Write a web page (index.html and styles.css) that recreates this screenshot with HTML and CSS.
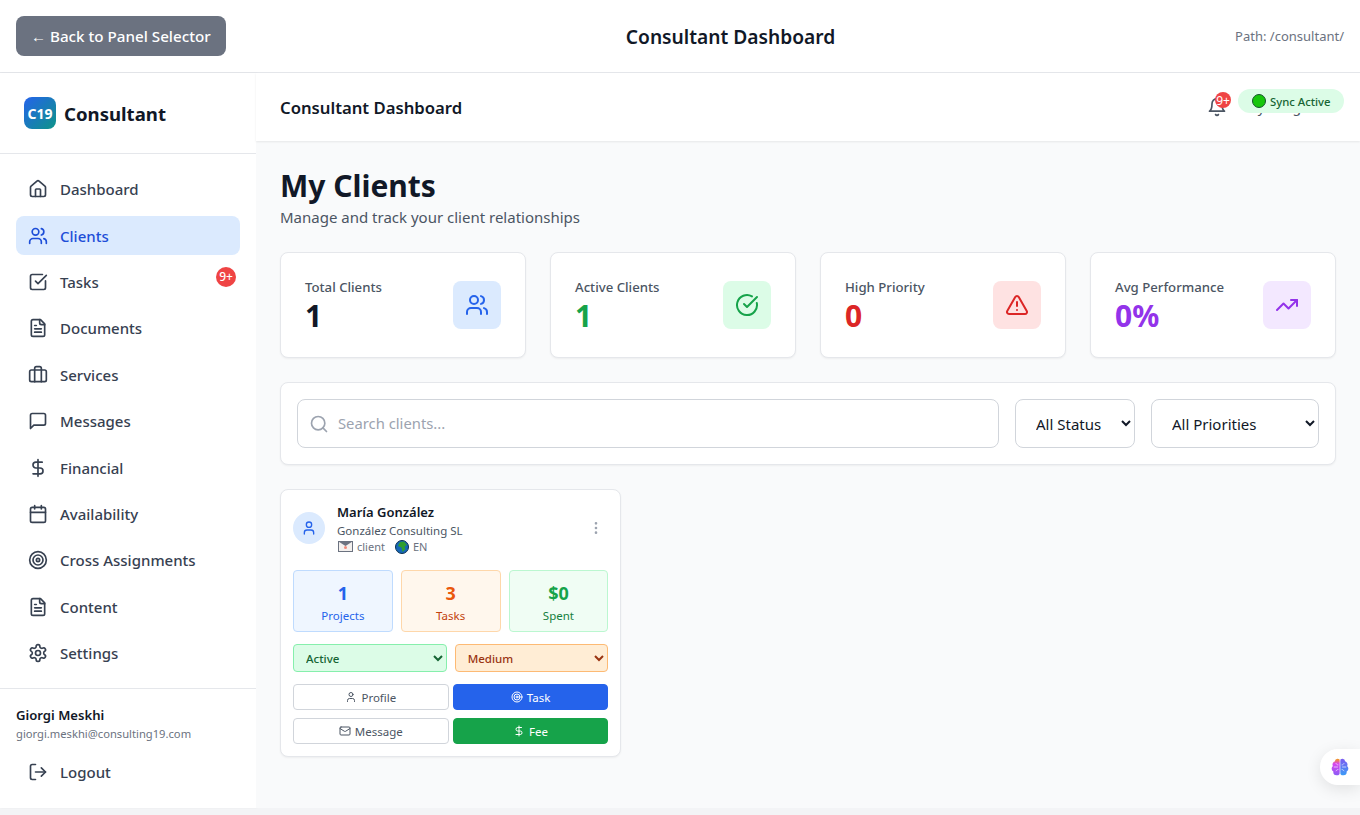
FILE: index.html
```html
<!DOCTYPE html>
<html lang="en">
<head>
    <meta charset="UTF-8">
    <meta name="viewport" content="width=device-width, initial-scale=1.0">
    <title>Consultant Dashboard</title>
    <link rel="stylesheet" href="styles.css">
</head>
<body>
    <svg class="icon-defs" width="0" height="0" aria-hidden="true">
        <defs>
            <symbol id="i-home" viewBox="0 0 24 24"><path d="M15 21v-8a1 1 0 0 0-1-1h-4a1 1 0 0 0-1 1v8"/><path d="M3 10a2 2 0 0 1 .709-1.528l7-5.999a2 2 0 0 1 2.582 0l7 5.999A2 2 0 0 1 21 10v9a2 2 0 0 1-2 2H5a2 2 0 0 1-2-2z"/></symbol>
            <symbol id="i-users" viewBox="0 0 24 24"><path d="M16 21v-2a4 4 0 0 0-4-4H6a4 4 0 0 0-4 4v2"/><circle cx="9" cy="7" r="4"/><path d="M22 21v-2a4 4 0 0 0-3-3.87"/><path d="M16 3.13a4 4 0 0 1 0 7.75"/></symbol>
            <symbol id="i-check-square" viewBox="0 0 24 24"><path d="M21 10.656V19a2 2 0 0 1-2 2H5a2 2 0 0 1-2-2V5a2 2 0 0 1 2-2h12.344"/><path d="m9 11 3 3L22 4"/></symbol>
            <symbol id="i-file" viewBox="0 0 24 24"><path d="M15 2H6a2 2 0 0 0-2 2v16a2 2 0 0 0 2 2h12a2 2 0 0 0 2-2V7Z"/><path d="M14 2v4a2 2 0 0 0 2 2h4"/><path d="M10 9H8"/><path d="M16 13H8"/><path d="M16 17H8"/></symbol>
            <symbol id="i-briefcase" viewBox="0 0 24 24"><path d="M16 20V4a2 2 0 0 0-2-2h-4a2 2 0 0 0-2 2v16"/><rect width="20" height="14" x="2" y="6" rx="2"/></symbol>
            <symbol id="i-message" viewBox="0 0 24 24"><path d="M21 15a2 2 0 0 1-2 2H7l-4 4V5a2 2 0 0 1 2-2h14a2 2 0 0 1 2 2z"/></symbol>
            <symbol id="i-dollar" viewBox="0 0 24 24"><path d="M12 2v20"/><path d="M17 5H9.5a3.5 3.5 0 0 0 0 7h5a3.5 3.5 0 0 1 0 7H6"/></symbol>
            <symbol id="i-calendar" viewBox="0 0 24 24"><path d="M8 2v4"/><path d="M16 2v4"/><rect width="18" height="18" x="3" y="4" rx="2"/><path d="M3 10h18"/></symbol>
            <symbol id="i-target" viewBox="0 0 24 24"><circle cx="12" cy="12" r="10"/><circle cx="12" cy="12" r="6"/><circle cx="12" cy="12" r="2"/></symbol>
            <symbol id="i-settings" viewBox="0 0 24 24"><path d="M12.22 2h-.44a2 2 0 0 0-2 2v.18a2 2 0 0 1-1 1.73l-.43.25a2 2 0 0 1-2 0l-.15-.08a2 2 0 0 0-2.73.73l-.22.38a2 2 0 0 0 .73 2.73l.15.1a2 2 0 0 1 1 1.72v.51a2 2 0 0 1-1 1.74l-.15.09a2 2 0 0 0-.73 2.73l.22.38a2 2 0 0 0 2.73.73l.15-.08a2 2 0 0 1 2 0l.43.25a2 2 0 0 1 1 1.73V20a2 2 0 0 0 2 2h.44a2 2 0 0 0 2-2v-.18a2 2 0 0 1 1-1.73l.43-.25a2 2 0 0 1 2 0l.15.08a2 2 0 0 0 2.73-.73l.22-.39a2 2 0 0 0-.73-2.73l-.15-.08a2 2 0 0 1-1-1.74v-.5a2 2 0 0 1 1-1.74l.15-.09a2 2 0 0 0 .73-2.73l-.22-.38a2 2 0 0 0-2.73-.73l-.15.08a2 2 0 0 1-2 0l-.43-.25a2 2 0 0 1-1-1.73V4a2 2 0 0 0-2-2z"/><circle cx="12" cy="12" r="3"/></symbol>
            <symbol id="i-logout" viewBox="0 0 24 24"><path d="M9 21H5a2 2 0 0 1-2-2V5a2 2 0 0 1 2-2h4"/><path d="m16 17 5-5-5-5"/><path d="M21 12H9"/></symbol>
            <symbol id="i-bell" viewBox="0 0 24 24"><path d="M6 8a6 6 0 0 1 12 0c0 7 3 9 3 9H3s3-2 3-9"/><path d="M10.3 21a1.94 1.94 0 0 0 3.4 0"/></symbol>
            <symbol id="i-circle-check" viewBox="0 0 24 24"><path d="M21.801 10A10 10 0 1 1 17 3.335"/><path d="m9 11 3 3L22 4"/></symbol>
            <symbol id="i-alert" viewBox="0 0 24 24"><path d="m21.73 18-8-14a2 2 0 0 0-3.48 0l-8 14A2 2 0 0 0 4 21h16a2 2 0 0 0 1.73-3"/><path d="M12 9v4"/><path d="M12 17h.01"/></symbol>
            <symbol id="i-trending" viewBox="0 0 24 24"><path d="m22 7-8.5 8.5-5-5L2 17"/><path d="M16 7h6v6"/></symbol>
            <symbol id="i-search" viewBox="0 0 24 24"><circle cx="11" cy="11" r="8"/><path d="m21 21-4.3-4.3"/></symbol>
            <symbol id="i-user" viewBox="0 0 24 24"><path d="M19 21v-2a4 4 0 0 0-4-4H9a4 4 0 0 0-4 4v2"/><circle cx="12" cy="7" r="4"/></symbol>
            <symbol id="i-mail" viewBox="0 0 24 24"><rect width="20" height="16" x="2" y="4" rx="2"/><path d="m22 7-8.97 5.7a1.94 1.94 0 0 1-2.06 0L2 7"/></symbol>
            <symbol id="i-more" viewBox="0 0 24 24"><circle cx="12" cy="12" r="1"/><circle cx="12" cy="5" r="1"/><circle cx="12" cy="19" r="1"/></symbol>
            <linearGradient id="brain-left" x1="0" y1="0" x2="0" y2="1">
                <stop offset="0" stop-color="#f59e0b"/>
                <stop offset="0.3" stop-color="#d946ef"/>
                <stop offset="1" stop-color="#8b5cf6"/>
            </linearGradient>
            <linearGradient id="brain-right" x1="0" y1="0" x2="0" y2="1">
                <stop offset="0" stop-color="#7c5cf0"/>
                <stop offset="1" stop-color="#3b9bf6"/>
            </linearGradient>
        </defs>
    </svg>

    <header class="topbar">
        <a class="back-btn"><span class="back-arrow">←</span> Back to Panel Selector</a>
        <h1 class="topbar-title">Consultant Dashboard</h1>
        <span class="topbar-path">Path: /consultant/</span>
    </header>

    <div class="layout">
        <aside class="sidebar">
            <div class="brand">
                <span class="brand-logo">C19</span>
                <span class="brand-name">Consultant</span>
            </div>
            <nav class="nav">
                <a class="nav-item"><svg class="icon"><use href="#i-home"/></svg>Dashboard</a>
                <a class="nav-item active"><svg class="icon"><use href="#i-users"/></svg>Clients</a>
                <a class="nav-item"><svg class="icon"><use href="#i-check-square"/></svg>Tasks<span class="nav-badge">9+</span></a>
                <a class="nav-item"><svg class="icon"><use href="#i-file"/></svg>Documents</a>
                <a class="nav-item"><svg class="icon"><use href="#i-briefcase"/></svg>Services</a>
                <a class="nav-item"><svg class="icon"><use href="#i-message"/></svg>Messages</a>
                <a class="nav-item"><svg class="icon"><use href="#i-dollar"/></svg>Financial</a>
                <a class="nav-item"><svg class="icon"><use href="#i-calendar"/></svg>Availability</a>
                <a class="nav-item"><svg class="icon"><use href="#i-target"/></svg>Cross Assignments</a>
                <a class="nav-item"><svg class="icon"><use href="#i-file"/></svg>Content</a>
                <a class="nav-item"><svg class="icon"><use href="#i-settings"/></svg>Settings</a>
            </nav>
            <div class="sidebar-footer">
                <div class="user-name">Giorgi Meskhi</div>
                <div class="user-email">giorgi.meskhi@consulting19.com</div>
                <a class="nav-item logout"><svg class="icon"><use href="#i-logout"/></svg>Logout</a>
            </div>
        </aside>

        <main class="main">
            <div class="main-header">
                <h2 class="main-title">Consultant Dashboard</h2>
                <div class="header-actions">
                    <span class="bell">
                        <svg class="icon"><use href="#i-bell"/></svg>
                        <span class="bell-badge">9+</span>
                    </span>
                    <span class="header-status">Syncing</span>
                </div>
                <span class="sync-pill"><span class="sync-dot"></span>Sync Active</span>
            </div>

            <div class="content">
                <h1 class="page-title">My Clients</h1>
                <p class="page-sub">Manage and track your client relationships</p>

                <section class="stats">
                    <div class="stat-card">
                        <div>
                            <div class="stat-label">Total Clients</div>
                            <div class="stat-value">1</div>
                        </div>
                        <span class="stat-icon blue"><svg class="icon"><use href="#i-users"/></svg></span>
                    </div>
                    <div class="stat-card">
                        <div>
                            <div class="stat-label">Active Clients</div>
                            <div class="stat-value green">1</div>
                        </div>
                        <span class="stat-icon green-bg"><svg class="icon"><use href="#i-circle-check"/></svg></span>
                    </div>
                    <div class="stat-card">
                        <div>
                            <div class="stat-label">High Priority</div>
                            <div class="stat-value red">0</div>
                        </div>
                        <span class="stat-icon red-bg"><svg class="icon"><use href="#i-alert"/></svg></span>
                    </div>
                    <div class="stat-card">
                        <div>
                            <div class="stat-label">Avg Performance</div>
                            <div class="stat-value purple">0%</div>
                        </div>
                        <span class="stat-icon purple-bg"><svg class="icon"><use href="#i-trending"/></svg></span>
                    </div>
                </section>

                <section class="filters">
                    <div class="search">
                        <svg class="icon search-icon"><use href="#i-search"/></svg>
                        <input type="text" class="search-input" placeholder="Search clients...">
                    </div>
                    <select class="filter-select status-filter"><option>All Status</option></select>
                    <select class="filter-select priority-filter"><option>All Priorities</option></select>
                </section>

                <section class="client-grid">
                    <article class="client-card">
                        <div class="client-head">
                            <span class="avatar"><svg class="icon"><use href="#i-user"/></svg></span>
                            <div class="client-info">
                                <div class="client-name">María González</div>
                                <div class="client-company">González Consulting SL</div>
                                <div class="client-meta">
                                    <svg class="meta-mail" viewBox="0 0 15 11"><rect x="0.5" y="0.5" width="14" height="10" fill="#f3f0ee" stroke="#6b7280"/><path d="M0.5 0.5h14L7.5 5z" fill="#6b7280"/><circle cx="7.5" cy="6.5" r="1.5" fill="#f08a7a"/></svg>
                                    <span>client</span>
                                    <svg class="meta-globe" viewBox="0 0 14 14"><circle cx="7" cy="7" r="6.5" fill="#1667b8" stroke="#0b2f4f"/><path d="M5 2l4-.5 3 3.500-2.500 1.500 1 2.500-3 3-1-4.500-3.500-1.500z" fill="#2f9e2f"/></svg>
                                    <span>EN</span>
                                </div>
                            </div>
                            <svg class="icon more"><use href="#i-more"/></svg>
                        </div>

                        <div class="client-stats">
                            <div class="mini-stat mini-blue"><b>1</b><span>Projects</span></div>
                            <div class="mini-stat mini-orange"><b>3</b><span>Tasks</span></div>
                            <div class="mini-stat mini-green"><b>$0</b><span>Spent</span></div>
                        </div>

                        <div class="client-selects">
                            <select class="mini-select select-green"><option>Active</option></select>
                            <select class="mini-select select-orange"><option>Medium</option></select>
                        </div>

                        <div class="client-actions">
                            <a class="action-btn"><svg class="icon"><use href="#i-user"/></svg>Profile</a>
                            <a class="action-btn btn-blue"><svg class="icon"><use href="#i-target"/></svg>Task</a>
                            <a class="action-btn"><svg class="icon"><use href="#i-mail"/></svg>Message</a>
                            <a class="action-btn btn-green"><svg class="icon"><use href="#i-dollar"/></svg>Fee</a>
                        </div>
                    </article>
                </section>
            </div>
        </main>
    </div>

    <div class="ai-widget">
        <svg class="brain" viewBox="0 0 24 24">
            <path fill="url(#brain-left)" d="M12 5a3 3 0 1 0-5.997.125 4 4 0 0 0-2.526 5.77 4 4 0 0 0 .556 6.588A4 4 0 1 0 12 18Z"/>
            <path fill="url(#brain-right)" d="M12 5a3 3 0 1 1 5.997.125 4 4 0 0 1 2.526 5.770 4 4 0 0 1-.556 6.588A4 4 0 1 1 12 18Z"/>
            <path class="brain-lines" d="M12 4v16M7 7.500c1 1.500 2 2 3 2M4.500 12h5M7 17c1-1.500 2-2 3-2M17 7.500c-1 1.500-2 2-3 2M19.500 12h-5M17 17c-1-1.500-2-2-3-2"/>
        </svg>
    </div>
</body>
</html>
```

FILE: styles.css
```css
* {
    box-sizing: border-box;
}
html, body {
    height: 100%;
}
body {
    margin: 0;
    overflow: hidden;
    font-family: "Noto Sans", Arial, sans-serif;
    background-color: #f3f4f6;
    color: #111827;
}
h1, h2, p {
    margin: 0;
}
.icon-defs {
    position: absolute;
}
.icon {
    width: 20px;
    height: 20px;
    flex: none;
    fill: none;
    stroke: currentColor;
    stroke-width: 2;
    stroke-linecap: round;
    stroke-linejoin: round;
}

/* top bar */
.topbar {
    height: 73px;
    padding: 0 16px;
    display: flex;
    align-items: center;
    justify-content: space-between;
    background-color: #fff;
    border-bottom: 1px solid #e5e7eb;
}
.back-btn {
    padding: 0 15px;
    height: 40px;
    width: 210px;
    display: flex;
    align-items: center;
    gap: 4px;
    font-size: 15.2px;
    font-weight: 500;
    color: #fff;
    background-color: #6b7280;
    border-radius: 8px;
    white-space: nowrap;
}
.back-arrow {
    font-family: "Liberation Sans", Arial, sans-serif;
    font-size: 15px;
}
.topbar-title {
    font-size: 19.2px;
    font-weight: 600;
}
.topbar-path {
    font-size: 13px;
    color: #6b7280;
}

.layout {
    display: flex;
    height: 735px;
}

/* sidebar */
.sidebar {
    width: 256px;
    flex: none;
    display: flex;
    flex-direction: column;
    background-color: #fff;
    box-shadow: 1px 0 2px rgba(0, 0, 0, 0.04);
}
.brand {
    height: 81px;
    padding: 0 24px;
    display: flex;
    align-items: center;
    gap: 8px;
    border-bottom: 1px solid #e5e7eb;
}
.brand-logo {
    width: 32px;
    height: 32px;
    display: flex;
    align-items: center;
    justify-content: center;
    font-size: 14px;
    font-weight: 700;
    color: #fff;
    background: linear-gradient(135deg, #2563eb, #0d9488);
    border-radius: 8px;
}
.brand-name {
    font-size: 18.6px;
    font-weight: 700;
}
.nav {
    flex: 1;
    padding: 16.1px 16px 0;
    display: flex;
    flex-direction: column;
    gap: 8px;
}
.nav-item {
    position: relative;
    height: 38.4px;
    flex: none;
    padding: 0 12px;
    display: flex;
    align-items: center;
    gap: 12px;
    font-size: 15px;
    font-weight: 500;
    color: #374151;
    border-radius: 8px;
}
.nav-item.active {
    color: #1d4ed8;
    background-color: #dbeafe;
}
.nav-badge {
    position: absolute;
    top: 4px;
    right: 4px;
    width: 20px;
    height: 20px;
    display: flex;
    align-items: center;
    justify-content: center;
    font-size: 12px;
    color: #fff;
    background-color: #ef4444;
    border-radius: 50%;
}
.sidebar-footer {
    padding: 16px;
    height: 120px;
    border-top: 1px solid #e5e7eb;
}
.user-name {
    font-size: 13.1px;
    font-weight: 600;
    line-height: 20px;
}
.user-email {
    margin-top: 1px;
    font-size: 11.2px;
    line-height: 16px;
    color: #6b7280;
}
.logout {
    margin-top: 11px;
}

/* main */
.main {
    flex: 1;
    min-width: 0;
    display: flex;
    flex-direction: column;
    background-color: #f9fafb;
}
.main-header {
    position: relative;
    height: 68px;
    flex: none;
    padding: 0 24px;
    display: flex;
    align-items: center;
    justify-content: space-between;
    background-color: #fff;
    box-shadow: 0 1px 2px rgba(0, 0, 0, 0.08);
}
.main-title {
    font-size: 16.7px;
    font-weight: 600;
}
.header-actions {
    display: flex;
    align-items: center;
    gap: 23px;
    margin-right: -8px;
    color: #4b5563;
}
.bell {
    position: relative;
    display: flex;
}
.bell-badge {
    position: absolute;
    top: -5px;
    left: 8px;
    width: 16px;
    height: 16px;
    display: flex;
    align-items: center;
    justify-content: center;
    font-size: 12px;
    color: #fff;
    background-color: #ef4444;
    border-radius: 50%;
}
.header-status {
    width: 94px;
    margin-top: -2px;
    font-size: 14px;
}
.sync-pill {
    position: absolute;
    top: 16px;
    right: 16px;
    width: 106px;
    height: 24px;
    padding-left: 14px;
    display: flex;
    align-items: center;
    gap: 4px;
    font-size: 11.3px;
    font-weight: 500;
    color: #166534;
    background-color: #dcfce7;
    border-radius: 12px;
    white-space: nowrap;
}
.sync-dot {
    width: 14px;
    height: 14px;
    background-color: #16c60c;
    border: 1px solid #14532d;
    border-radius: 50%;
}

.content {
    flex: 1;
    padding: 24px;
}
.page-title {
    font-size: 30px;
    font-weight: 700;
    line-height: 41px;
}
.page-sub {
    font-size: 15px;
    line-height: 22px;
    color: #4b5563;
}

/* stat cards */
.stats {
    margin-top: 24px;
    display: grid;
    grid-template-columns: repeat(4, 1fr);
    gap: 24px;
}
.stat-card {
    height: 106px;
    padding: 24px;
    display: flex;
    align-items: center;
    justify-content: space-between;
    background-color: #fff;
    border: 1px solid #e5e7eb;
    border-radius: 8px;
    box-shadow: 0 1px 2px rgba(0, 0, 0, 0.05);
}
.stat-label {
    font-size: 13.2px;
    font-weight: 500;
    line-height: 20px;
    color: #4b5563;
}
.stat-value {
    margin-bottom: -2px;
    font-size: 30px;
    font-weight: 700;
    line-height: 38px;
}
.stat-value.green { color: #16a34a; }
.stat-value.red { color: #dc2626; }
.stat-value.purple { color: #9333ea; }
.stat-icon {
    width: 48px;
    height: 48px;
    display: flex;
    align-items: center;
    justify-content: center;
    border-radius: 8px;
}
.stat-icon .icon {
    width: 24px;
    height: 24px;
}
.stat-icon.blue { color: #2563eb; background-color: #dbeafe; }
.stat-icon.green-bg { color: #16a34a; background-color: #dcfce7; }
.stat-icon.red-bg { color: #dc2626; background-color: #fee2e2; }
.stat-icon.purple-bg { color: #9333ea; background-color: #f3e8ff; }

/* filters */
.filters {
    margin-top: 24px;
    padding: 16px;
    display: flex;
    gap: 16px;
    background-color: #fff;
    border: 1px solid #e5e7eb;
    border-radius: 8px;
    box-shadow: 0 1px 2px rgba(0, 0, 0, 0.05);
}
.search {
    position: relative;
    flex: 1;
}
.search-icon {
    position: absolute;
    top: 15px;
    left: 12px;
    color: #9ca3af;
}
.search-input {
    width: 100%;
    height: 49px;
    padding: 0 16px 2px 40px;
    font: inherit;
    font-size: 14.8px;
    border: 1px solid #d1d5db;
    border-radius: 8px;
}
.search-input::placeholder {
    color: #9ca3af;
}
.filter-select {
    height: 49px;
    padding: 0 16px;
    font: inherit;
    font-size: 15px;
    color: #111827;
    background-color: #fff;
    border: 1px solid #d1d5db;
    border-radius: 8px;
}
.status-filter { width: 120px; }
.priority-filter { width: 168px; }

/* client card */
.client-grid {
    margin-top: 24px;
    display: grid;
    grid-template-columns: repeat(3, 1fr);
    gap: 16px;
}
.client-card {
    height: 268px;
    padding: 12px;
    background-color: #fff;
    border: 1px solid #e5e7eb;
    border-radius: 8px;
    box-shadow: 0 1px 2px rgba(0, 0, 0, 0.05);
}
.client-head {
    display: flex;
    align-items: center;
    gap: 12px;
}
.avatar {
    width: 32px;
    height: 32px;
    flex: none;
    display: flex;
    align-items: center;
    justify-content: center;
    color: #2563eb;
    background-color: #dbeafe;
    border-radius: 50%;
}
.avatar .icon {
    width: 16px;
    height: 16px;
}
.client-info {
    flex: 1;
    min-width: 0;
}
.client-name {
    font-size: 13px;
    font-weight: 600;
    line-height: 20px;
}
.client-company {
    font-size: 11.5px;
    line-height: 17px;
    color: #4b5563;
}
.client-meta {
    height: 15px;
    padding-left: 1px;
    display: flex;
    align-items: center;
    gap: 4px;
    font-size: 11px;
    color: #6b7280;
}
.meta-mail {
    width: 15px;
    height: 11px;
}
.meta-globe {
    width: 14px;
    height: 14px;
    margin-left: 6px;
}
.more {
    width: 16px;
    height: 16px;
    margin-right: 4px;
    color: #9ca3af;
}
.client-stats {
    margin-top: 16px;
    display: grid;
    grid-template-columns: repeat(3, 1fr);
    gap: 8px;
}
.mini-stat {
    height: 62px;
    padding-top: 2px;
    display: flex;
    flex-direction: column;
    align-items: center;
    justify-content: center;
    border: 1px solid;
    border-radius: 4px;
}
.mini-stat b {
    font-size: 18px;
    font-weight: 700;
    line-height: 26px;
}
.mini-stat span {
    margin-top: 1px;
    font-size: 11.5px;
    line-height: 17px;
}
.mini-blue { color: #2563eb; background-color: #eff6ff; border-color: #bfdbfe; }
.mini-orange { color: #c2410c; background-color: #fff7ed; border-color: #fed7aa; }
.mini-orange b { color: #ea580c; }
.mini-green { color: #15803d; background-color: #f0fdf4; border-color: #bbf7d0; }
.mini-green b { color: #16a34a; }
.client-selects {
    margin-top: 12px;
    display: grid;
    grid-template-columns: 1fr 1fr;
    gap: 8px;
}
.mini-select {
    width: 100%;
    height: 28px;
    padding: 0 8px;
    font: inherit;
    font-size: 11.5px;
    font-weight: 500;
    border: 1px solid;
    border-radius: 4px;
}
.select-green { color: #166534; background-color: #dcfce7; border-color: #86efac; }
.select-orange { color: #9a3412; background-color: #ffedd5; border-color: #fdba74; }
.client-actions {
    margin-top: 12px;
    display: grid;
    grid-template-columns: 1fr 1fr;
    gap: 8px 4px;
}
.action-btn {
    height: 26px;
    display: flex;
    align-items: center;
    justify-content: center;
    gap: 4px;
    font-size: 11.5px;
    color: #4b5563;
    background-color: #fff;
    border: 1px solid #d1d5db;
    border-radius: 4px;
}
.action-btn .icon {
    width: 12px;
    height: 12px;
}
.btn-blue { color: #fff; background-color: #2563eb; border-color: #2563eb; }
.btn-green { color: #fff; background-color: #16a34a; border-color: #16a34a; }

/* floating widget */
.ai-widget {
    position: fixed;
    right: 0;
    top: 749px;
    width: 40px;
    height: 36px;
    display: flex;
    align-items: center;
    padding-left: 10px;
    background-color: #fff;
    border-radius: 18px 0 0 18px;
    box-shadow: 0 4px 16px rgba(0, 0, 0, 0.1);
}
.brain {
    width: 20px;
    height: 20px;
}
.brain-lines {
    fill: none;
    stroke: #fff;
    stroke-width: 1;
    stroke-opacity: 0.75;
}
```
